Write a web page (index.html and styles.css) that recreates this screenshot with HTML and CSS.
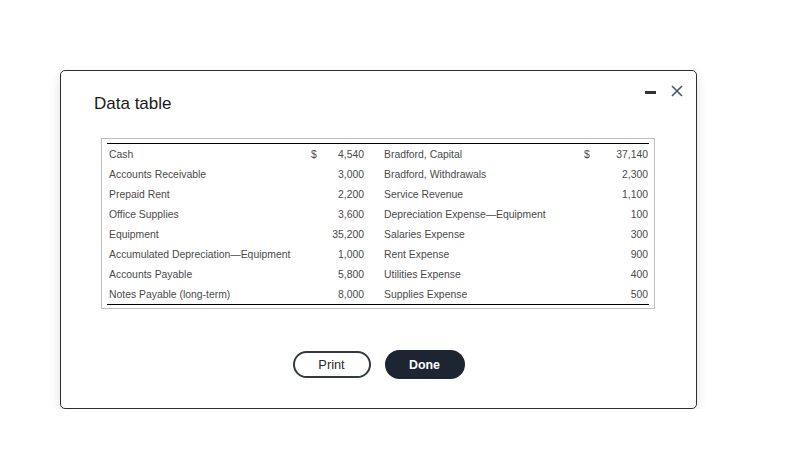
FILE: index.html
```html
<!DOCTYPE html>
<html>
<head>
<meta charset="utf-8">
<link rel="stylesheet" href="styles.css">
</head>
<body>
<div class="dialog">
  <div class="controls">
    <span class="minimize"></span>
    <svg class="close" width="12" height="12" viewBox="0 0 12 12"><path d="M1 1L11 11M11 1L1 11" stroke="#4a5563" stroke-width="1.6" fill="none"/></svg>
  </div>
  <h1 class="title">Data table</h1>
  <div class="tablebox">
    <table class="data">
      <colgroup>
        <col class="c1"><col class="c2"><col class="c3"><col class="c4"><col class="c5"><col class="c6">
      </colgroup>
      <tbody>
        <tr><td class="lbl">Cash</td><td class="cur">$</td><td class="num">4,540</td><td class="lbl2">Bradford, Capital</td><td class="cur">$</td><td class="num2">37,140</td></tr>
        <tr><td class="lbl">Accounts Receivable</td><td class="cur"></td><td class="num">3,000</td><td class="lbl2">Bradford, Withdrawals</td><td class="cur"></td><td class="num2">2,300</td></tr>
        <tr><td class="lbl">Prepaid Rent</td><td class="cur"></td><td class="num">2,200</td><td class="lbl2">Service Revenue</td><td class="cur"></td><td class="num2">1,100</td></tr>
        <tr><td class="lbl">Office Supplies</td><td class="cur"></td><td class="num">3,600</td><td class="lbl2">Depreciation Expense—Equipment</td><td class="cur"></td><td class="num2">100</td></tr>
        <tr><td class="lbl">Equipment</td><td class="cur"></td><td class="num">35,200</td><td class="lbl2">Salaries Expense</td><td class="cur"></td><td class="num2">300</td></tr>
        <tr><td class="lbl">Accumulated Depreciation—Equipment</td><td class="cur"></td><td class="num">1,000</td><td class="lbl2">Rent Expense</td><td class="cur"></td><td class="num2">900</td></tr>
        <tr><td class="lbl">Accounts Payable</td><td class="cur"></td><td class="num">5,800</td><td class="lbl2">Utilities Expense</td><td class="cur"></td><td class="num2">400</td></tr>
        <tr class="last"><td class="lbl">Notes Payable (long-term)</td><td class="cur"></td><td class="num">8,000</td><td class="lbl2">Supplies Expense</td><td class="cur"></td><td class="num2">500</td></tr>
      </tbody>
    </table>
  </div>
  <div class="actions">
    <button class="btn print">Print</button>
    <button class="btn done">Done</button>
  </div>
</div>
</body>
</html>
```
FILE: styles.css
```css
html, body {
  margin: 0;
  padding: 0;
  background: #ffffff;
  font-family: "Liberation Sans", Arial, sans-serif;
}
body {
  padding: 70px 0 0 60px;
}
.dialog {
  position: relative;
  box-sizing: border-box;
  width: 637px;
  height: 339px;
  border: 1px solid #2e2e2e;
  border-radius: 5px;
  background: #fff;
  box-shadow: 0 5px 12px rgba(0, 0, 0, 0.12);
  padding: 23px 41px 0 33px;
}
.controls {
  position: absolute;
  top: 14px;
  right: 13px;
  display: flex;
  align-items: center;
  gap: 15px;
}
.minimize {
  display: block;
  width: 11px;
  height: 3px;
  background: #333;
  margin-top: 2px;
}
.close {
  display: block;
}
.title {
  margin: 0 0 24px 0;
  font-size: 17px;
  line-height: 20px;
  font-weight: normal;
  color: #1a1a1a;
}
.tablebox {
  margin-left: 7px;
  border: 1px solid #bdbdbd;
  padding: 4px 5px 3px 5px;
  width: 542px;
}
.data {
  border-collapse: collapse;
  table-layout: fixed;
  width: 542px;
  border-top: 1px solid #000;
  font-size: 10.4px;
  color: #4a4a4a;
}
.c1 { width: 198px; }
.c2 { width: 20px; }
.c3 { width: 41px; }
.c4 { width: 212px; }
.c5 { width: 20px; }
.c6 { width: 51px; }
.data td {
  height: 18px;
  line-height: 18px;
  padding: 2px 0 0 0;
  white-space: nowrap;
  vertical-align: top;
}
.data tr.last td {
  border-bottom: 1px solid #000;
}
.data td.lbl { padding-left: 2px; }
.data td.cur { padding-left: 6px; }
.data td.num { text-align: right; padding-right: 2px; }
.data td.lbl2 { padding-left: 18px; }
.data td.num2 { text-align: right; padding-right: 1px; }
.actions {
  display: flex;
  justify-content: center;
  align-items: center;
  gap: 14px;
  margin-top: 41px;
  padding-left: 8px;
}
.btn {
  font-family: "Liberation Sans", Arial, sans-serif;
  border-radius: 15px;
  cursor: pointer;
  padding: 0;
}
.print {
  width: 78px;
  height: 27px;
  background: #fff;
  border: 2px solid #333a45;
  color: #2a2a2a;
  font-size: 12.8px;
}
.done {
  width: 80px;
  height: 29px;
  background: #1d2432;
  border: none;
  color: #fff;
  font-size: 12.4px;
  font-weight: bold;
}
```
